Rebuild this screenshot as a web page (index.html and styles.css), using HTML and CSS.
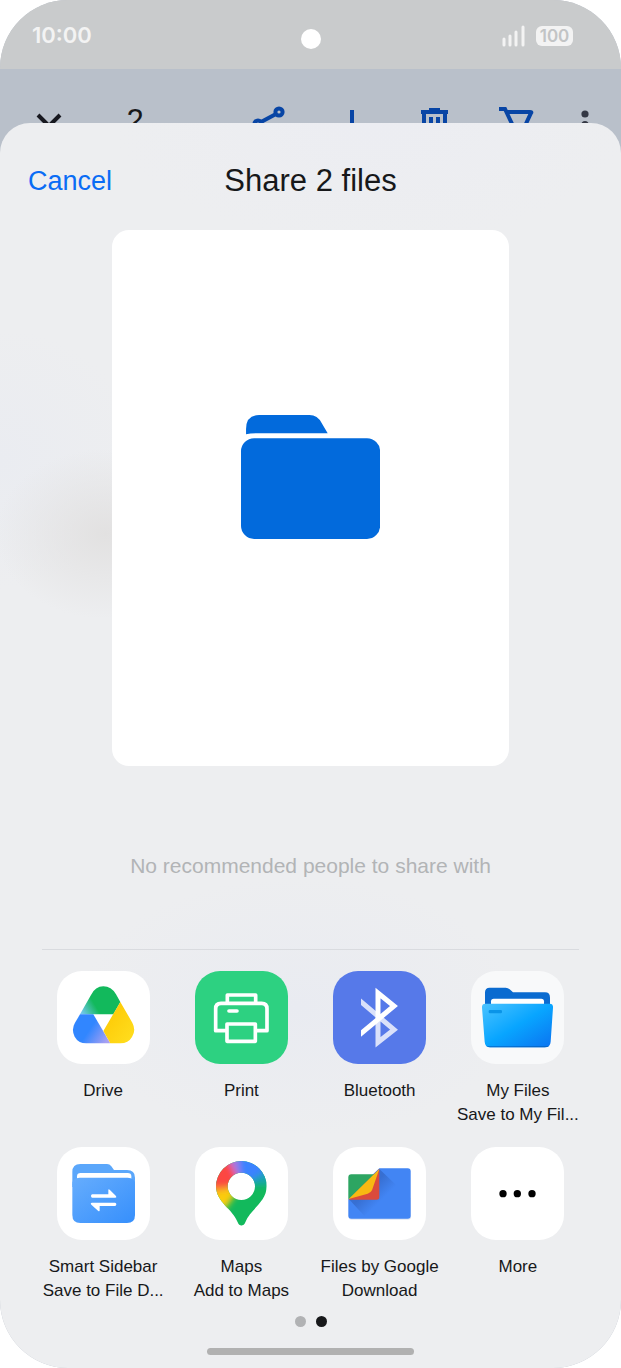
FILE: index.html
```
<!DOCTYPE html>
<html lang="en">
<head>
    <meta charset="UTF-8">
    <meta name="viewport" content="width=device-width, initial-scale=1.0">
    <title>Share 2 files</title>
    <link rel="stylesheet" href="styles.css">
</head>
<body>
    <div class="phone">
        <div class="status-bar">
            <span class="time">10:00</span>
            <span class="camera"></span>
            <div class="status-icons">
                <svg class="signal" viewBox="0 0 24 22">
                    <path d="M2 14V20M8 11V20M14 7V20M21 2V20" />
                </svg>
                <span class="battery">100</span>
            </div>
        </div>

        <div class="toolbar">
            <button type="button" aria-label="Close">
                <svg viewBox="0 0 32 32"><path d="M5 8L25 28M27 8L7 28" /></svg>
            </button>
            <span class="count">2</span>
            <span></span>
            <button type="button" class="blue" aria-label="Share">
                <svg viewBox="0 0 32 32">
                    <circle cx="25" cy="5" r="3.6" /><circle cx="4" cy="17" r="3.6" /><circle cx="25" cy="29" r="3.6" />
                    <path d="M7 15L22 7M7 19L22 27" />
                </svg>
            </button>
            <button type="button" class="blue" aria-label="Download">
                <svg viewBox="0 0 32 32"><path d="M16 3V26M7 18L16 27L25 18M4 30H28" /></svg>
            </button>
            <button type="button" class="blue" aria-label="Delete">
                <svg viewBox="0 0 32 32"><path d="M3 5H30M11 3H22M6 5V29H27V5M13 10V24M20 10V24" /></svg>
            </button>
            <button type="button" class="blue" aria-label="Order">
                <svg viewBox="0 0 32 32"><path d="M-1 2H5L14 21H24L31 6Q32 5 30 5H6" /><circle cx="14" cy="27" r="2" /><circle cx="25" cy="27" r="2" /></svg>
            </button>
            <button type="button" class="dots-menu" aria-label="More options">
                <svg viewBox="0 0 32 32"><circle cx="16" cy="7" r="3.6" /><circle cx="16" cy="17.5" r="3.6" /><circle cx="16" cy="28" r="3.6" /></svg>
            </button>
        </div>

        <main class="sheet">
            <header class="sheet-header">
                <button type="button" class="cancel">Cancel</button>
                <h1>Share 2 files</h1>
            </header>

            <div class="preview">
                <svg viewBox="0 0 138 124">
                    <path d="M5 19V14Q5 0 18 0H68Q76 0 80 8L86 18H15Q9 18 5 19Z" />
                    <rect x="0" y="23" width="138" height="100" rx="13" />
                </svg>
            </div>

            <p class="message">No recommended people to share with</p>

            <div class="apps">
                <button type="button" class="app">
                    <svg class="tile" viewBox="0 0 279 279">
                        <defs>
                            <linearGradient id="driveGreen" gradientUnits="userSpaceOnUse" x1="72" y1="122" x2="112" y2="98">
                                <stop offset="0" stop-color="#72c7ee" />
                                <stop offset="1" stop-color="#12b95c" />
                            </linearGradient>
                            <linearGradient id="driveBlue" gradientUnits="userSpaceOnUse" x1="98" y1="175" x2="150" y2="210">
                                <stop offset="0" stop-color="#3186ff" />
                                <stop offset="1" stop-color="#a8a0f2" />
                            </linearGradient>
                            <linearGradient id="driveYellow" x1="0" y1="0" x2="1" y2="1">
                                <stop offset="0" stop-color="#fdc500" />
                                <stop offset="1" stop-color="#ffdf20" />
                            </linearGradient>
                        </defs>
                        <path fill="url(#driveGreen)" d="M69 130L102 72Q115 46 139 46Q163 46 177 70L190 93L169 130Z" />
                        <path fill="url(#driveBlue)" d="M69 130H109L160 217H88Q64 217 53 197Q42 176 54 155Z" />
                        <path fill="url(#driveYellow)" d="M190 93L226 155Q238 178 225 198Q214 217 190 217H160L139 180Z" />
                    </svg>
                    <span>Drive</span>
                </button>
                <button type="button" class="app">
                    <svg class="tile green" viewBox="0 0 279 279">
                        <g fill="none" stroke="#fff" stroke-width="11" stroke-linejoin="round">
                            <path d="M97 97V72H182V97" />
                            <path d="M95 179H62V113Q62 97 78 97H200Q216 97 216 113V179H183" />
                            <rect x="96" y="159" width="85" height="52" />
                            <path d="M102 120H126" stroke-linecap="round" />
                        </g>
                    </svg>
                    <span>Print</span>
                </button>
                <button type="button" class="app">
                    <svg class="tile indigo" viewBox="0 0 279 279">
                        <clipPath id="btClip"><rect x="84" y="40" width="120" height="200" /></clipPath>
                        <g fill="none" stroke="#fff" stroke-width="15" clip-path="url(#btClip)">
                            <path d="M74 84L183 176L135 214V142" stroke-opacity=".78" />
                            <path d="M74 196L183 105L135 66V146" />
                        </g>
                    </svg>
                    <span>Bluetooth</span>
                </button>
                <button type="button" class="app">
                    <svg class="tile pale" viewBox="0 0 279 279">
                        <defs>
                            <linearGradient id="filesFront" x1="0" y1="0" x2="1" y2="1">
                                <stop offset="0" stop-color="#4cc3ff" />
                                <stop offset=".5" stop-color="#08a5ff" />
                                <stop offset="1" stop-color="#0b72f0" />
                            </linearGradient>
                        </defs>
                        <path fill="#0a6bd0" d="M42 110V64Q42 50 56 50H104Q111 50 116 55L126 64H222Q237 64 237 80V110Z" />
                        <rect x="60" y="83" width="159" height="30" rx="8" fill="#fff" />
                        <path fill="url(#filesFront)" d="M43 98H236Q247 98 246 110L239 212Q238 229 221 229H57Q42 229 41 212L33 110Q32 98 43 98Z" />
                        <path d="M46 226Q52 229 57 229H221Q230 229 234 225Z" fill="#0768c8" />
                        <rect x="53" y="117" width="40" height="10" rx="4" fill="#0a94e8" />
                    </svg>
                    <span>My Files</span>
                    <span>Save to My Fil...</span>
                </button>
                <button type="button" class="app">
                    <svg class="tile" viewBox="0 0 279 279">
                        <defs>
                            <linearGradient id="sideFront" x1="0" y1="0" x2="1" y2="1">
                                <stop offset="0" stop-color="#66adfd" />
                                <stop offset="1" stop-color="#368ffc" />
                            </linearGradient>
                        </defs>
                        <path fill="#5ba7fb" d="M46 120V75Q46 51 70 51H150Q158 51 163 58L171 69H210Q234 69 234 92V120Z" />
                        <path fill="#fff" d="M60 100V88Q60 78 71 78H212Q223 78 223 88V100Z" />
                        <path fill="url(#sideFront)" d="M46 112Q46 92 68 92H212Q234 92 234 112V204Q234 228 210 228H70Q46 228 46 204Z" />
                        <path fill="#fff" d="M106 142H154V130Q154 124 158 128L177 147Q180 152 175 152H106Q102 152 102 147Q102 142 106 142ZM174 167Q178 167 178 172Q178 177 174 177H128V190Q128 195 123 191L103 173Q99 167 105 167Z" />
                    </svg>
                    <span>Smart Sidebar</span>
                    <span>Save to File D...</span>
                </button>
                <button type="button" class="app">
                    <svg class="tile" viewBox="0 0 279 279">
                        <defs>
                            <clipPath id="pin">
                                <path clip-rule="evenodd" d="M139 42A76 76 0 0 1 215 118C215 166 165 187 151 226Q147 236 139 236Q132 236 128 226C114 187 63 166 63 118A76 76 0 0 1 139 42ZM139 77A41 41 0 1 0 139 159A41 41 0 1 0 139 77Z" />
                            </clipPath>
                            <filter id="soft" x="-60%" y="-60%" width="220%" height="220%"><feGaussianBlur stdDeviation="9" /></filter>
                        </defs>
                        <g clip-path="url(#pin)">
                            <rect x="55" y="35" width="170" height="210" fill="#12b95c" />
                            <g filter="url(#soft)">
                                <path fill="#15a5ac" d="M139 118L190 40L240 60V112Z" />
                                <path fill="#3b82ff" d="M139 118L125 20H190L215 72Z" />
                                <path fill="#a878e0" d="M139 118L85 35L128 20Z" />
                                <path fill="#fc4643" d="M139 118L30 122V50L95 30Z" />
                                <path fill="#fb8a28" d="M139 118L30 120V142Z" />
                                <path fill="#fbcc10" d="M139 118L40 138V180L88 190Z" />
                            </g>
                        </g>
                    </svg>
                    <span>Maps</span>
                    <span>Add to Maps</span>
                </button>
                <button type="button" class="app">
                    <svg class="tile" viewBox="0 0 279 279">
                        <defs>
                            <linearGradient id="fold" gradientUnits="userSpaceOnUse" x1="110" y1="125" x2="145" y2="160">
                                <stop offset="0" stop-color="#376fd2" />
                                <stop offset="1" stop-color="#4285f4" />
                            </linearGradient>
                        </defs>
                        <rect x="47" y="150" width="187" height="68" rx="9" fill="#dfe5f2" />
                        <path fill="#4285f4" d="M139 64H224Q233 64 233 73V206Q233 215 224 215H55Q46 215 46 206V156L120 82Z" />
                        <path fill="url(#fold)" d="M139 66L190 115L95 208L48 157Z" />
                        <path fill="#2da562" d="M46 156V91Q46 82 55 82H124L100 130Z" />
                        <path fill="#db4b3c" d="M139 66V150Q139 158 131 158H47Z" />
                        <path fill="#f8b912" d="M139 66L47 156L104 140Q113 138 117 130Z" />
                    </svg>
                    <span>Files by Google</span>
                    <span>Download</span>
                </button>
                <button type="button" class="app">
                    <svg class="tile" viewBox="0 0 279 279">
                        <circle cx="96" cy="140" r="11" /><circle cx="139" cy="140" r="11" /><circle cx="183" cy="140" r="11" />
                    </svg>
                    <span>More</span>
                </button>
            </div>

            <div class="pages">
                <span></span>
                <span class="current"></span>
            </div>
            <div class="home-handle"></div>
        </main>
    </div>
</body>
</html>
```
FILE: styles.css
```
* {
    box-sizing: border-box;
}

body {
    margin: 0;
    background-color: #fff;
    font-family: "Liberation Sans", Arial, sans-serif;
    color: #17181a;
}

button {
    padding: 0;
    border: none;
    background: none;
    font: inherit;
    color: inherit;
    cursor: pointer;
}

.phone {
    display: flex;
    flex-direction: column;
    min-height: 100vh;
    background-color: #b9c0ca;
    border-radius: 68px;
    overflow: hidden;
}

/* Status bar */
.status-bar {
    display: grid;
    grid-template-columns: 1fr auto 1fr;
    align-items: center;
    height: 69px;
    padding: 4px 48px 0 32px;
    background-color: #c9cbcc;
    color: #f3f3f3;
    font-family: Inter, "Liberation Sans", sans-serif;
}

.time {
    font-size: 22px;
    line-height: 28px;
    font-weight: 600;
    margin-bottom: 4px;
}

.camera {
    width: 20px;
    height: 20px;
    margin: 4px 0 0 16px;
    border-radius: 50%;
    background-color: #fff;
}

.status-icons {
    display: flex;
    justify-content: flex-end;
    align-items: center;
    gap: 10px;
    margin-bottom: 2px;
}

.signal {
    width: 24px;
    height: 22px;
    stroke: #f3f3f3;
    stroke-width: 3;
    stroke-linecap: round;
}

.battery {
    width: 37px;
    border-radius: 6px;
    background-color: #f3f3f3;
    color: #c2c4c5;
    font-size: 17px;
    line-height: 20px;
    font-weight: 600;
    text-align: center;
}

/* Toolbar of the gallery under the sheet */
.toolbar {
    display: grid;
    grid-template-columns: 97px 76px 1fr repeat(4, 82px) 56px;
    align-items: center;
    justify-items: center;
    height: 108px;
    padding-right: 8px;
}

.toolbar svg {
    display: block;
    width: 32px;
    height: 32px;
    fill: none;
    stroke: #17181f;
    stroke-width: 4;
    overflow: visible;
}

.toolbar .blue svg {
    stroke: #0845a5;
}

.toolbar .dots-menu svg {
    fill: #343844;
    stroke: none;
}

.count {
    padding-bottom: 4px;
    font-size: 31px;
    line-height: 36px;
}

/* Share sheet */
.sheet {
    display: flex;
    flex: 1;
    flex-direction: column;
    align-items: center;
    margin-top: -54px;
    padding-bottom: 12px;
    border-radius: 30px 30px 0 0;
    background:
        radial-gradient(110px 85px at 17% 33%, #e2e1e1, transparent),
        radial-gradient(140px 130px at 0 27%, #eaecf1, transparent),
        radial-gradient(220px 130px at 48% 71%, #e9ebf1, transparent),
        radial-gradient(260px 120px at 60% 0, #ecedf2, transparent),
        #edeef0;
}

.sheet-header {
    display: grid;
    grid-template-columns: 1fr auto 1fr;
    align-items: center;
    width: 100%;
    height: 107px;
    padding: 8px 28px 0;
}

.cancel {
    justify-self: start;
    color: #0a6cf5;
    font-size: 27px;
    line-height: 32px;
}

.sheet-header h1 {
    margin: 0;
    font-size: 31px;
    line-height: 36px;
    font-weight: 400;
}

.preview {
    display: flex;
    align-items: center;
    justify-content: center;
    width: 64%;
    aspect-ratio: 397 / 535;
    padding-bottom: 40px;
    border-radius: 17px;
    background-color: #fff;
}

.preview svg {
    width: 35%;
    fill: #026adc;
}

.message {
    margin: 0;
    padding: 84px 0 67px;
    color: #b2b4b6;
    font-size: 21px;
    line-height: 32px;
}

.apps {
    display: grid;
    grid-template-columns: repeat(4, 1fr);
    gap: 20px 0;
    width: calc(100% - 68px);
    padding-top: 22px;
    background: linear-gradient(#d9dbdf, #d9dbdf) center top / calc(100% - 16px) 1px no-repeat;
}

.app {
    display: flex;
    flex-direction: column;
    align-items: center;
    min-width: 0;
    font-size: 17px;
    line-height: 24px;
    white-space: nowrap;
}

.tile {
    width: 93px;
    height: 93px;
    margin-bottom: 15px;
    border-radius: 25px;
    background-color: #fff;
}

.tile.green {
    background-color: #2dd181;
}

.tile.indigo {
    background-color: #5679e9;
}

.tile.pale {
    background-color: #f8f9fa;
}

.pages {
    display: flex;
    gap: 10px;
    padding: 13px 0 21px;
}

.pages span {
    width: 11px;
    height: 11px;
    border-radius: 50%;
    background-color: #b1b2b4;
}

.pages .current {
    background-color: #17181a;
}

.home-handle {
    width: 207px;
    height: 7px;
    border-radius: 4px;
    background-color: #b1b1b1;
}
```
